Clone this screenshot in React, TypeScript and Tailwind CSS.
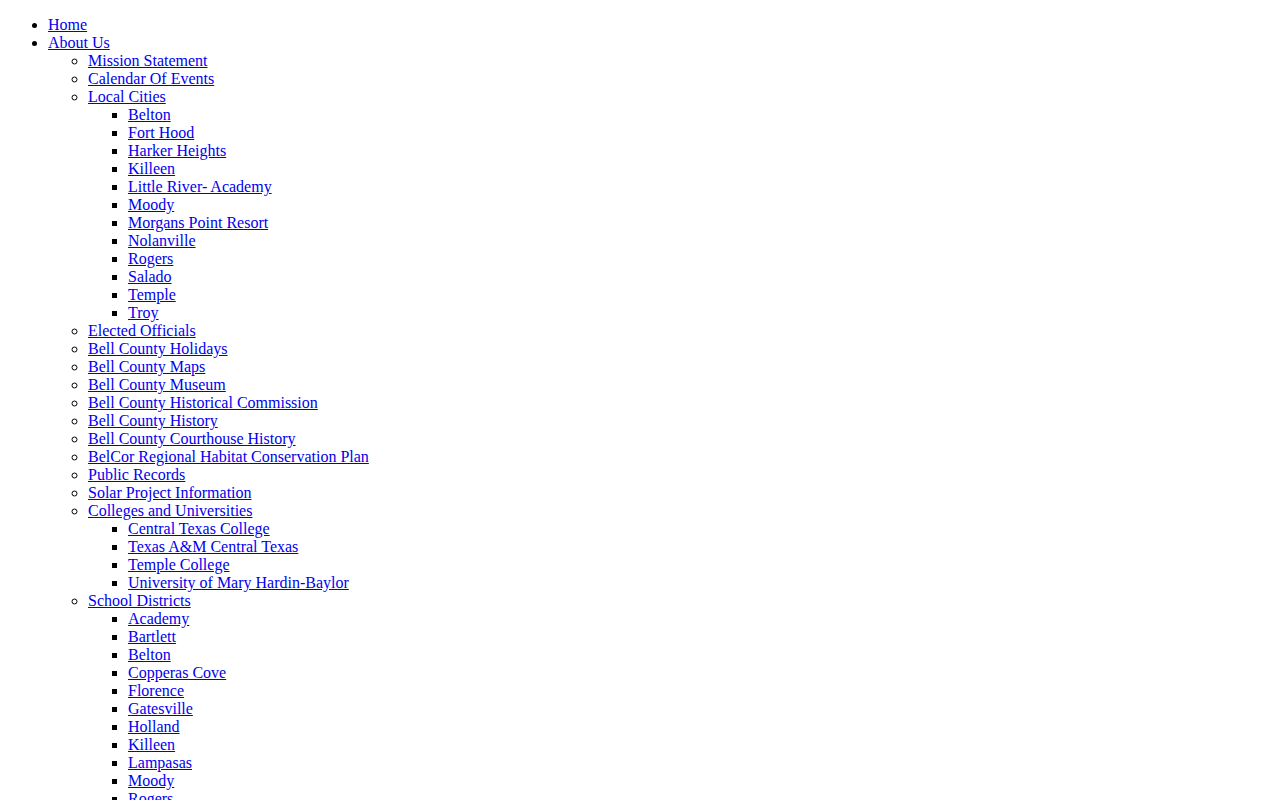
type Item = { label: string; children?: Item[] };

const cities = [
  "Belton",
  "Fort Hood",
  "Harker Heights",
  "Killeen",
  "Little River- Academy",
  "Moody",
  "Morgans Point Resort",
  "Nolanville",
  "Rogers",
  "Salado",
  "Temple",
  "Troy",
];

const colleges = [
  "Central Texas College",
  "Texas A&M Central Texas",
  "Temple College",
  "University of Mary Hardin-Baylor",
];

const schools = [
  "Academy",
  "Bartlett",
  "Belton",
  "Copperas Cove",
  "Florence",
  "Gatesville",
  "Holland",
  "Killeen",
  "Lampasas",
  "Moody",
  "Rogers",
  "Salado",
  "Temple",
  "Troy",
];

const nav: Item[] = [
  { label: "Home" },
  {
    label: "About Us",
    children: [
      { label: "Mission Statement" },
      { label: "Calendar Of Events" },
      { label: "Local Cities", children: cities.map((c) => ({ label: c })) },
      { label: "Elected Officials" },
      { label: "Bell County Holidays" },
      { label: "Bell County Maps" },
      { label: "Bell County Museum" },
      { label: "Bell County Historical Commission" },
      { label: "Bell County History" },
      { label: "Bell County Courthouse History" },
      { label: "BelCor Regional Habitat Conservation Plan" },
      { label: "Public Records" },
      { label: "Solar Project Information" },
      { label: "Colleges and Universities", children: colleges.map((c) => ({ label: c })) },
      { label: "School Districts", children: schools.map((c) => ({ label: c })) },
    ],
  },
];

function List({ items, depth }: { items: Item[]; depth: number }) {
  const bullet = depth === 0 ? "list-disc" : depth === 1 ? "list-[circle]" : "list-[square]";
  return (
    <ul className={`${bullet} pl-10`}>
      {items.map((item, i) => (
        <li key={i}>
          <a href="#" className="text-[#0000ee] underline">
            {item.label}
          </a>
          {item.children && <List items={item.children} depth={depth + 1} />}
        </li>
      ))}
    </ul>
  );
}

export default function App() {
  return (
    <div className="bg-white text-black px-2 py-4 text-[16px] leading-[18px] font-['Liberation_Serif','Times_New_Roman',serif] min-h-[800px]">
      <List items={nav} depth={0} />
    </div>
  );
}
